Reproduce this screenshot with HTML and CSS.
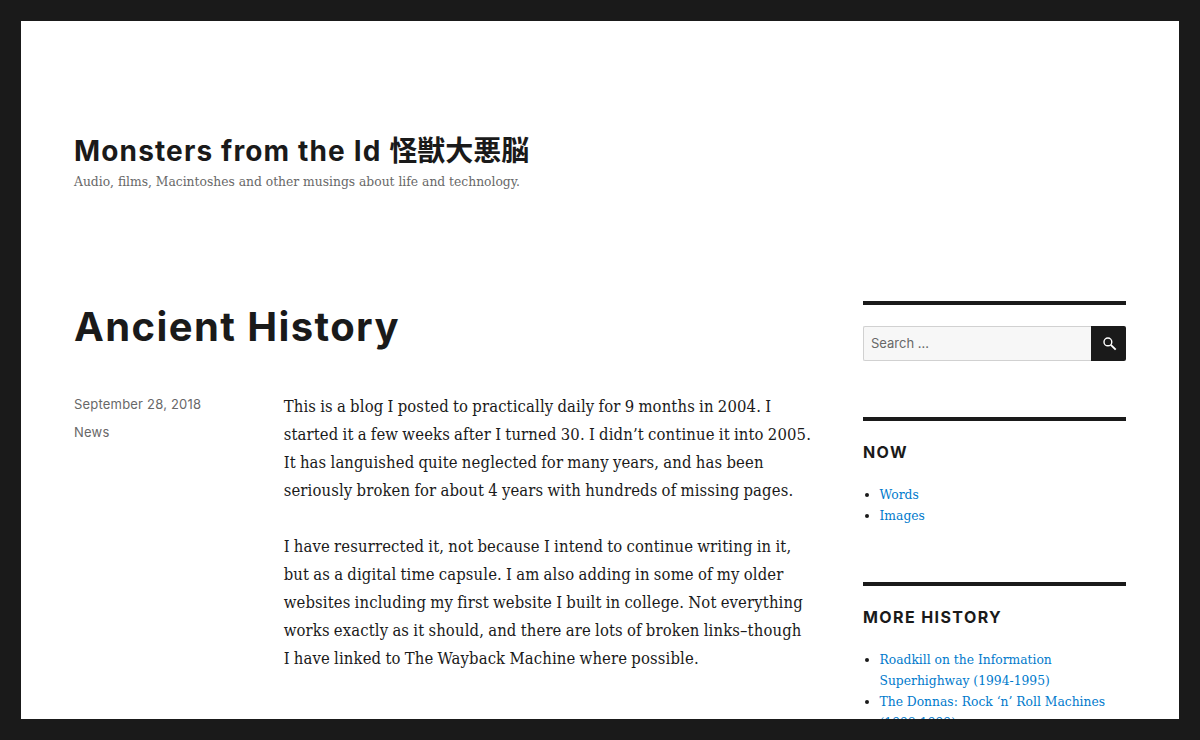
FILE: index.html
```html
<!DOCTYPE html>
<html lang="en-US">
<head>
    <meta charset="UTF-8">
    <meta name="viewport" content="width=device-width, initial-scale=1">
    <title>Monsters from the Id 怪獣大悪脳</title>
    <link rel="stylesheet" href="styles.css">
</head>
<body>
    <div class="site">
        <header class="site-header">
            <p class="site-title"><span class="site-name">Monsters from the Id </span><span class="cjk" lang="ja">怪獣大悪脳</span></p>
            <p class="site-description">Audio, films, Macintoshes and other musings about life and technology.</p>
        </header>

        <div class="site-content">
            <main class="content-area">
                <article>
                    <h1 class="entry-title">Ancient History</h1>
                    <div class="entry-body">
                        <footer class="entry-footer">
                            <span class="posted-on">September 28, 2018</span>
                            <span class="cat-links">News</span>
                        </footer>
                        <div class="entry-content">
                            <p>This is a blog I posted to practically daily for 9 months in 2004. I<br>
                            started it a few weeks after I turned 30. I didn’t continue it into 2005.<br>
                            It has languished quite neglected for many years, and has been<br>
                            seriously broken for about 4 years with hundreds of missing pages.</p>
                            <p>I have resurrected it, not because I intend to continue writing in it,<br>
                            but as a digital time capsule. I am also adding in some of my older<br>
                            websites including my first website I built in college. Not everything<br>
                            works exactly as it should, and there are lots of broken links–though<br>
                            I have linked to The Wayback Machine where possible.</p>
                        </div>
                    </div>
                </article>
            </main>

            <aside class="sidebar">
                <section class="widget widget-search">
                    <form class="search-form">
                        <input type="search" class="search-field" placeholder="Search …">
                        <button type="button" class="search-submit" aria-label="Search">
                            <svg width="14" height="14" viewBox="0 0 14 14" fill="none" stroke="#fff">
                                <circle cx="4.9" cy="4.9" r="3.9" stroke-width="1.4"/>
                                <path d="M7.8 7.8l4.9 4.9" stroke-width="1.9"/>
                            </svg>
                        </button>
                    </form>
                </section>
                <section class="widget">
                    <h2 class="widget-title">Now</h2>
                    <ul>
                        <li><a href="#">Words</a></li>
                        <li><a href="#">Images</a></li>
                    </ul>
                </section>
                <section class="widget">
                    <h2 class="widget-title">More History</h2>
                    <ul>
                        <li><a href="#">Roadkill on the Information<br>Superhighway (1994-1995)</a></li>
                        <li><a href="#">The Donnas: Rock ‘n’ Roll Machines<br>(1998-1999)</a></li>
                    </ul>
                </section>
            </aside>
        </div>
    </div>
</body>
</html>
```
FILE: styles.css
```css
* {
    box-sizing: border-box;
}

body {
    margin: 0;
    padding: 21px;
    height: 100vh;
    overflow: hidden;
    background: #1a1a1a;
    color: #1a1a1a;
    font-family: "DejaVu Serif Condensed", "DejaVu Serif", serif;
    font-stretch: condensed;
    font-size: 16.5px;
    line-height: 28px;
}

p, h1, h2, ul {
    margin: 0;
}

a {
    color: #007acc;
    text-decoration: none;
}

.site {
    height: 100%;
    overflow: hidden;
    background: #fff;
}

.site-header {
    padding: 112px 53px 0;
    height: 280px;
}

.site-title {
    font-family: Inter, "Noto Sans CJK JP", sans-serif;
    font-size: 28px;
    font-weight: 700;
    line-height: 36px;
    white-space: nowrap;
}

.site-name {
    letter-spacing: 1.15px;
}

.cjk {
    font-family: "Noto Sans CJK JP", sans-serif;
    line-height: 1;
}

.site-description {
    margin-top: 3px;
    color: #686868;
    font-size: 13.7px;
    line-height: 18px;
    white-space: nowrap;
}

.site-content {
    display: flex;
    justify-content: space-between;
    padding: 0 53px;
}

.content-area {
    width: 737px;
}

.entry-title {
    padding-top: 1px;
    font-family: Inter, sans-serif;
    font-size: 40px;
    font-weight: 700;
    letter-spacing: 1.4px;
    line-height: 49px;
}

.entry-body {
    display: flex;
    margin-top: 41px;
}

.entry-footer {
    display: flex;
    flex-direction: column;
    gap: 7px;
    width: 210.5px;
    padding-top: 2px;
    color: #686868;
    font-family: Inter, sans-serif;
    font-size: 13px;
    letter-spacing: 0.2px;
    line-height: 21px;
}

.entry-content {
    padding-top: 1px;
    letter-spacing: 0.14px;
    word-spacing: -0.7px;
    white-space: nowrap;
}

.entry-content p {
    margin-bottom: 28px;
}

.sidebar {
    width: 263px;
}

.widget {
    border-top: 4px solid #1a1a1a;
    padding-top: 21px;
    margin-bottom: 56px;
    font-size: 13.7px;
    line-height: 21px;
}

.search-form {
    display: flex;
    height: 35px;
}

.search-field {
    flex: 1;
    min-width: 0;
    padding: 0 7px 1px;
    border: 1px solid #d1d1d1;
    border-right: 0;
    border-radius: 2px 0 0 2px;
    background: #f7f7f7;
    font-family: Inter, sans-serif;
    font-size: 13px;
}

.search-field::placeholder {
    color: #686868;
}

.search-submit {
    display: flex;
    align-items: center;
    justify-content: center;
    width: 35px;
    padding: 0 0 0 3px;
    border: 0;
    border-radius: 0 2px 2px 0;
    background: #1a1a1a;
}

.widget-title {
    margin-bottom: 21px;
    font-family: Inter, sans-serif;
    font-size: 16px;
    font-weight: 700;
    letter-spacing: 1.4px;
    line-height: 21px;
    text-transform: uppercase;
}

.widget ul {
    padding-left: 16.5px;
    white-space: nowrap;
}
```
